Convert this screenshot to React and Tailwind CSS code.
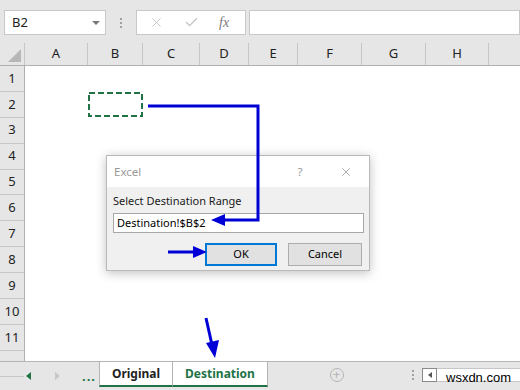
import { X, Check } from "lucide-react"

const cols = [
  { name: "A", w: 63 },
  { name: "B", w: 55 },
  { name: "C", w: 57 },
  { name: "D", w: 49 },
  { name: "E", w: 49 },
  { name: "F", w: 64 },
  { name: "G", w: 64 },
  { name: "H", w: 63 },
  { name: "", w: 40 },
]

const rows = [1, 2, 3, 4, 5, 6, 7, 8, 9, 10, 11, ""]

function VDots() {
  return (
    <div className="flex flex-col gap-[2px] items-center">
      <span className="w-[2px] h-[2px] bg-[#a0a0a0]" />
      <span className="w-[2px] h-[2px] bg-[#a0a0a0]" />
      <span className="w-[2px] h-[2px] bg-[#a0a0a0]" />
    </div>
  )
}

function Arrows() {
  const blue = "#0000d6"
  return (
    <svg className="absolute inset-0 pointer-events-none" width="520" height="390">
      <rect x="89" y="93" width="53" height="23" fill="none" stroke="#217346" strokeWidth="2" strokeDasharray="6 3" />
      <polyline points="148,106 258,106 258,220 222,220" fill="none" stroke={blue} strokeWidth="3" />
      <polygon points="211,220 225,214 225,226" fill={blue} />
      <line x1="168" y1="252" x2="196" y2="252" stroke={blue} strokeWidth="3" />
      <polygon points="207,252 193,246 193,258" fill={blue} />
      <line x1="206" y1="318" x2="212" y2="345" stroke={blue} strokeWidth="3" />
      <polygon points="215,358 206,343 219,340" fill={blue} />
    </svg>
  )
}

function Dialog() {
  return (
    <div className="absolute left-[106px] top-[155px] w-[264px] h-[116px] bg-[#f0f0f0] border border-[#b9b9b9] shadow-[0_2px_10px_rgba(0,0,0,0.25)] flex flex-col">
      <div className="h-[31px] bg-white flex items-center pl-[7px] text-[11.5px] text-[#999999]">
        <span className="flex-1">Excel</span>
        <span className="w-[12px] text-center mr-[33px]">?</span>
        <X size={14} strokeWidth={1} className="text-[#777777] mr-[16px]" />
      </div>
      <div className="flex flex-col px-[6px] pt-[6px]">
        <div className="text-[11px] text-[#1a1a1a] leading-[16px]">Select Destination Range</div>
        <div className="mt-[4px] h-[20px] w-[251px] bg-white border border-[#a8a8a8] text-[11px] text-black flex items-center px-[3px]">
          Destination!$B$2
        </div>
        <div className="flex justify-end gap-[11px] mt-[10px] pr-[1px]">
          <button className="w-[72px] h-[23px] bg-[#e1e1e1] border-2 border-[#0078d7] text-[11px] text-black">OK</button>
          <button className="w-[74px] h-[23px] bg-[#e1e1e1] border border-[#adadad] text-[11px] text-black">Cancel</button>
        </div>
      </div>
    </div>
  )
}

export default function App() {
  return (
    <div className="relative w-[520px] h-[390px] overflow-hidden bg-white font-['Noto_Sans',sans-serif]">
      {/* formula bar */}
      <div className="h-[43px] bg-[#e6e6e6] flex items-center pl-[4px] pt-[2px]">
        <div className="w-[102px] h-[25px] bg-white border border-[#c8c8c8] flex items-center pl-[7px] pr-[5px] text-[13px] text-[#222]">
          <span className="flex-1">B2</span>
          <span className="w-0 h-0 border-l-[4px] border-r-[4px] border-t-[4px] border-l-transparent border-r-transparent border-t-[#7a7a7a]" />
        </div>
        <div className="w-[30px] flex justify-center">
          <VDots />
        </div>
        <div className="w-[110px] h-[25px] bg-white border border-[#c8c8c8] flex items-center text-[#c2c2c2]">
          <X size={15} strokeWidth={1.5} className="ml-[12px]" />
          <Check size={15} strokeWidth={2} className="ml-[20px]" />
          <span className="ml-[20px] italic font-['Liberation_Serif',serif] text-[14px] text-[#7a7a7a]">fx</span>
        </div>
        <div className="ml-[3px] flex-1 h-[25px] bg-white border border-[#c8c8c8]" />
      </div>

      {/* column headers */}
      <div className="h-[23px] bg-[#e6e6e6] flex border-b border-[#b0b0b0]">
        <div className="w-[25px] shrink-0 border-r border-[#c6c6c6] relative">
          <svg className="absolute right-[3px] bottom-[3px]" width="13" height="13"><polygon points="13,0 13,13 0,13" fill="#b7b7b7" /></svg>
        </div>
        {cols.map((c, i) => (
          <div
            key={i}
            style={{ width: c.w }}
            className="shrink-0 border-r border-[#c6c6c6] flex items-center justify-center text-[13px] text-[#222]"
          >
            {c.name}
          </div>
        ))}
      </div>

      {/* grid */}
      <div className="flex h-[295px]">
        <div className="w-[25px] shrink-0 bg-[#e6e6e6] border-r border-[#b0b0b0] flex flex-col">
          {rows.map((r, i) => (
            <div key={i} className="h-[25.9px] shrink-0 border-b border-[#c6c6c6] flex items-center justify-center text-[13px] text-[#222]">
              {r}
            </div>
          ))}
        </div>
        <div className="flex-1 bg-white" />
      </div>

      {/* sheet tabs */}
      <div className="h-[29px] bg-[#e6e6e6] border-t border-[#b4b4b4] flex items-stretch">
        <div className="w-[99px] flex items-center">
          <span className="ml-[26px] w-0 h-0 border-t-[4px] border-b-[4px] border-r-[5px] border-t-transparent border-b-transparent border-r-[#217346]" />
          <span className="ml-[24px] w-0 h-0 border-t-[4px] border-b-[4px] border-l-[5px] border-t-transparent border-b-transparent border-l-[#c6c6c6]" />
          <span className="ml-[22px] text-[13px] font-bold text-[#217346] tracking-[1px] leading-none">...</span>
        </div>
        <div className="w-[74px] mb-[3px] bg-white border-l border-r border-[#b4b4b4] border-b-2 border-b-[#217346] flex items-center justify-center text-[12px] font-bold text-[#222]">
          Original
        </div>
        <div className="w-[95px] mb-[3px] bg-white border-r border-[#b4b4b4] border-b-2 border-b-[#217346] flex items-center justify-center text-[12px] font-bold text-[#217346]">
          Destination
        </div>
        <div className="w-[137px] flex items-center justify-center pb-[3px]">
          <span className="w-[14px] h-[14px] rounded-full border border-[#b4b4b4] flex items-center justify-center text-[#b4b4b4] text-[13px] leading-none">+</span>
        </div>
        <div className="w-[16px] flex items-center justify-center pb-[3px]">
          <VDots />
        </div>
        <div className="flex-1 flex items-start pt-[6px] pl-[1px]">
          <div className="w-[15px] h-[14px] bg-white border border-[#8a8a8a] flex items-center justify-center">
            <span className="w-0 h-0 border-t-[3px] border-b-[3px] border-r-[4px] border-t-transparent border-b-transparent border-r-[#555]" />
          </div>
          <div className="flex-1 h-[14px] bg-white border-y border-[#c6c6c6] text-[13px] leading-[17px] text-black font-['Liberation_Sans',sans-serif] pl-[9px]">
            wsxdn.com
          </div>
        </div>
      </div>

      <Dialog />
      <Arrows />
    </div>
  )
}
